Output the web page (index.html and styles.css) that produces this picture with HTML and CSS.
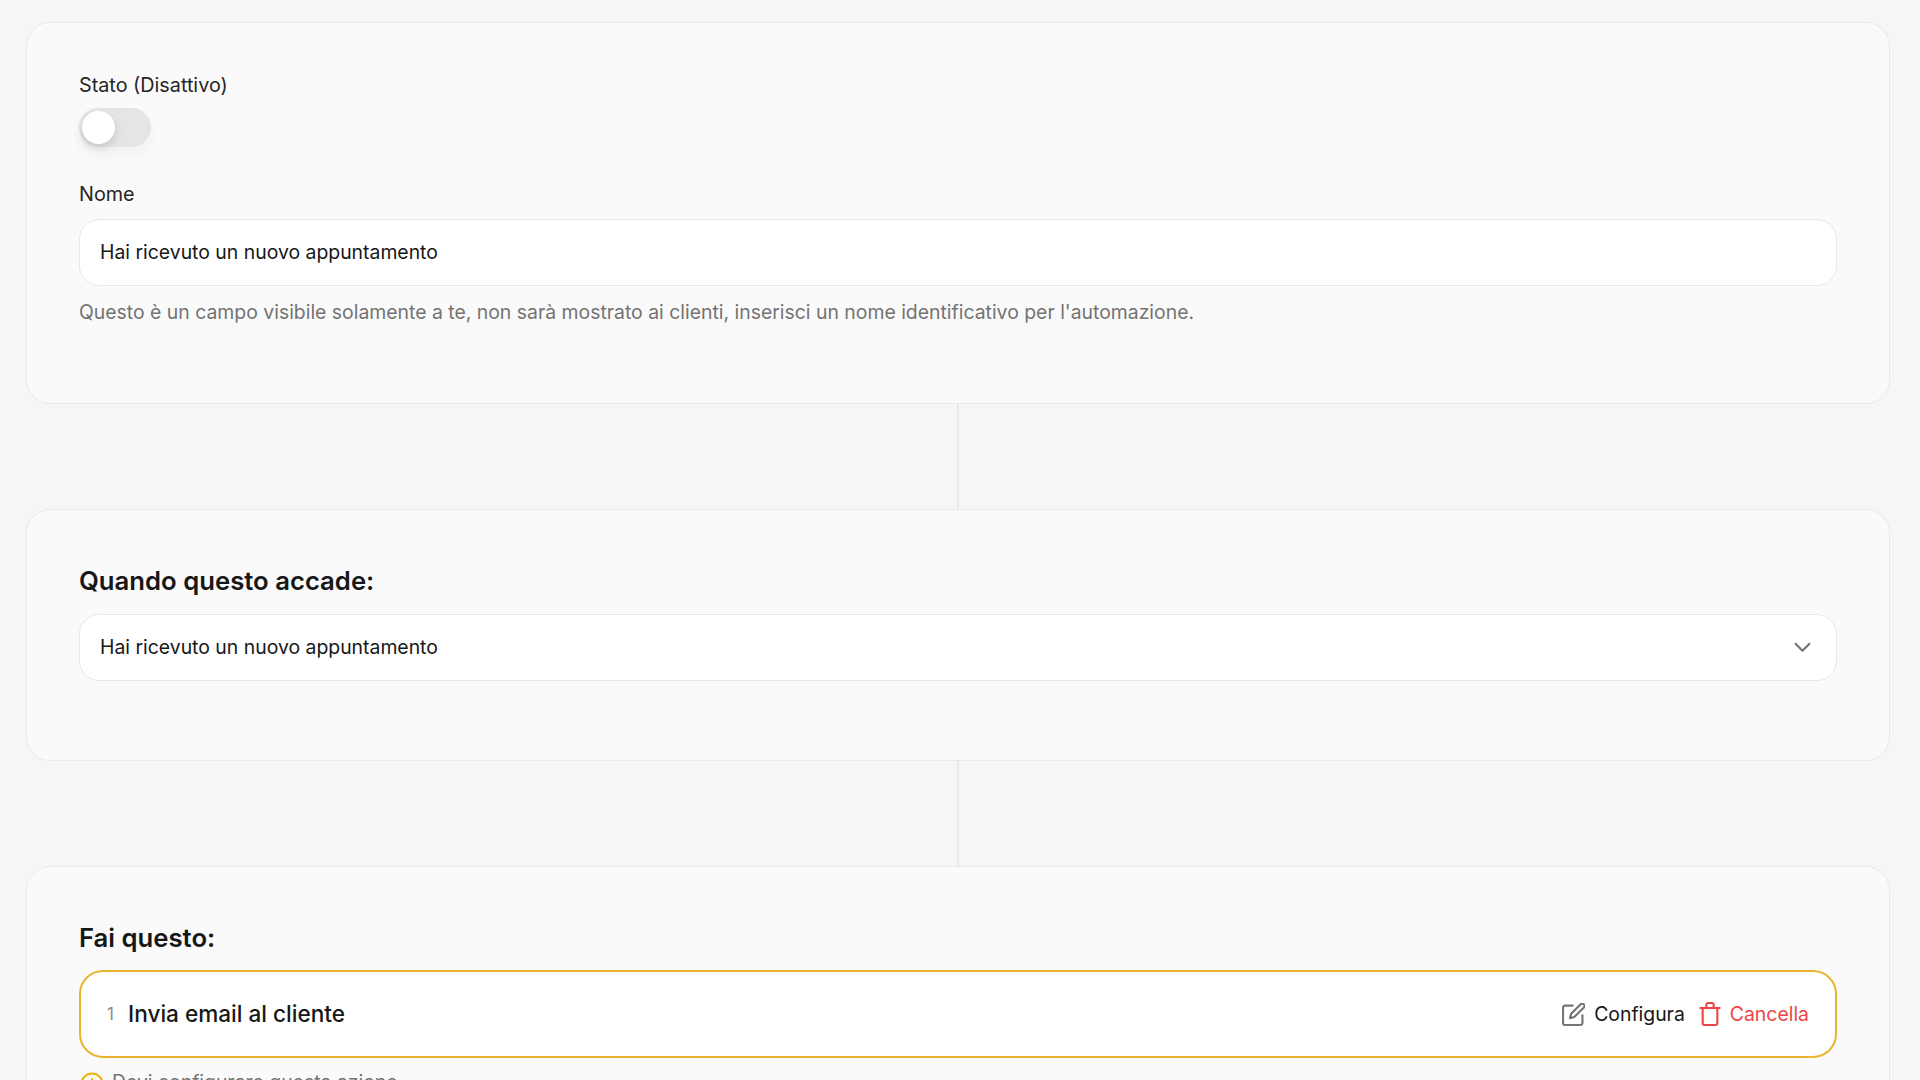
FILE: index.html
```html
<!DOCTYPE html>
<html lang="it">
<head>
<meta charset="utf-8">
<title>Automazione</title>
<link rel="stylesheet" href="styles.css">
</head>
<body>
<main class="flow">
  <section class="card card-general">
    <label class="label">Stato (Disattivo)</label>
    <div class="toggle"><span class="knob"></span></div>
    <label class="label label-name">Nome</label>
    <div class="field">Hai ricevuto un nuovo appuntamento</div>
    <p class="help">Questo è un campo visibile solamente a te, non sarà mostrato ai clienti, inserisci un nome identificativo per l'automazione.</p>
  </section>
  <div class="connector"></div>
  <section class="card card-trigger">
    <h2 class="heading">Quando questo accade:</h2>
    <div class="field field-select">
      <span>Hai ricevuto un nuovo appuntamento</span>
      <svg class="chevron" viewBox="0 0 16 10" fill="none" stroke="#737373" stroke-width="2" stroke-linecap="round" stroke-linejoin="round"><path d="M1.5 1.5 8 8l6.5-6.5"/></svg>
    </div>
  </section>
  <div class="connector"></div>
  <section class="card card-action">
    <h2 class="heading">Fai questo:</h2>
    <div class="action">
      <span class="step">1</span>
      <span class="action-name">Invia email al cliente</span>
      <button class="btn">
        <svg class="icon icon-edit" viewBox="0.5 1 22.500 22.500" fill="none" stroke="#757575" stroke-width="2.100" stroke-linecap="round" stroke-linejoin="round"><path d="M11 3.500H3.500a2 2 0 0 0-2 2V20.500a2 2 0 0 0 2 2H18.500a2 2 0 0 0 2-2V13"/><path d="M18.800 2.200a2.200 2.200 0 0 1 3.100 3.100L12.500 14.700l-4.200 1.100 1.100-4.200z"/></svg>
        Configura
      </button>
      <button class="btn btn-danger">
        <svg class="icon" viewBox="0 0 24 26" fill="none" stroke="#ef4444" stroke-width="2.300" stroke-linecap="round" stroke-linejoin="round"><path d="M1.500 6.500h21"/><path d="M4 6.500V22.500a2.500 2.500 0 0 0 2.500 2.500h11a2.500 2.500 0 0 0 2.500-2.500V6.500"/><path d="M8 6.500V3a2 2 0 0 1 2-2h4a2 2 0 0 1 2 2v3.500"/></svg>
        Cancella
      </button>
    </div>
    <p class="warning">
      <svg class="warn-icon" viewBox="0 0 24 24" fill="none" stroke="#eab308" stroke-width="2" stroke-linecap="round"><circle cx="12" cy="12" r="10.500"/><path d="M12 7v6"/><path d="M12 17v.01"/></svg>
      Devi configurare questa azione
    </p>
  </section>
</main>
</body>
</html>
```
FILE: styles.css
```css
* { box-sizing: border-box; }
html, body { margin: 0; height: 100%; overflow: hidden; }
body {
  background: #f6f6f6;
  color: #171717;
  font-family: Inter, "Liberation Sans", sans-serif;
  font-size: 19.4px;
  line-height: 28px;
}
.flow {
  display: flex;
  flex-direction: column;
  width: 1864px;
  margin: 22px 0 0 26px;
}
.card {
  background: #fafafa;
  border: 1px solid #e9e9e9;
  border-radius: 24px;
  padding: 53px 52px 78px 52px;
  flex: none;
}
.card-general { height: 382px; padding-top: 48px; }
.card-trigger { height: 252px; }
.label { display: block; color: #262626; font-size: 19.8px; }
.label-name { margin-top: 33px; }
.toggle {
  width: 72px;
  height: 39px;
  margin-top: 9px;
  border-radius: 20px;
  background: #e5e5e5;
  padding: 3px 0 0 3px;
  box-shadow: 0 8px 16px rgba(0, 0, 0, .04);
}
.knob {
  display: block;
  width: 33px;
  height: 33px;
  border-radius: 50%;
  background: #fff;
  box-shadow: 0 4px 10px rgba(0, 0, 0, .14);
}
.field {
  height: 67px;
  margin-top: 11px;
  padding: 0 20px 2px;
  display: flex;
  align-items: center;
  justify-content: space-between;
  background: #fff;
  border: 1.5px solid #e8e8e8;
  border-radius: 20px;
  color: #171717;
}
.help { margin: 12px 0 0; color: #737373; }
.heading {
  margin: 0 0 14px;
  font-size: 25.7px;
  line-height: 36px;
  font-weight: 600;
  color: #171717;
}
.card-trigger .heading { margin-bottom: 15px; }
.field-select { margin-top: 0; }
.chevron { width: 17px; height: 11px; margin: 2px 5px 0 0; }
.connector { width: 2px; height: 105px; background: #e8e8e8; align-self: center; flex: none; }
.action {
  height: 88px;
  padding: 0 26px;
  display: flex;
  align-items: center;
  background: #fff;
  border: 2px solid #eab52e;
  border-radius: 24px;
}
.step { width: 21px; color: #8a8a8a; font-size: 17px; }
.action-name { flex: 1; font-size: 22.6px; font-weight: 500; color: #171717; }
.btn {
  display: flex;
  align-items: center;
  gap: 9px;
  padding: 0;
  border: 0;
  background: none;
  font: inherit;
  color: #171717;
}
.btn-danger { color: #ef4444; margin-left: 14px; }
.icon { width: 22px; height: 24px; }
.icon-edit { width: 23px; height: 23px; }
.warning {
  margin: 10px 0 0;
  display: flex;
  align-items: flex-start;
  gap: 8px;
  color: #737373;
}
.warn-icon { width: 24px; height: 24px; margin: 4px 0 0 1px; }
```
